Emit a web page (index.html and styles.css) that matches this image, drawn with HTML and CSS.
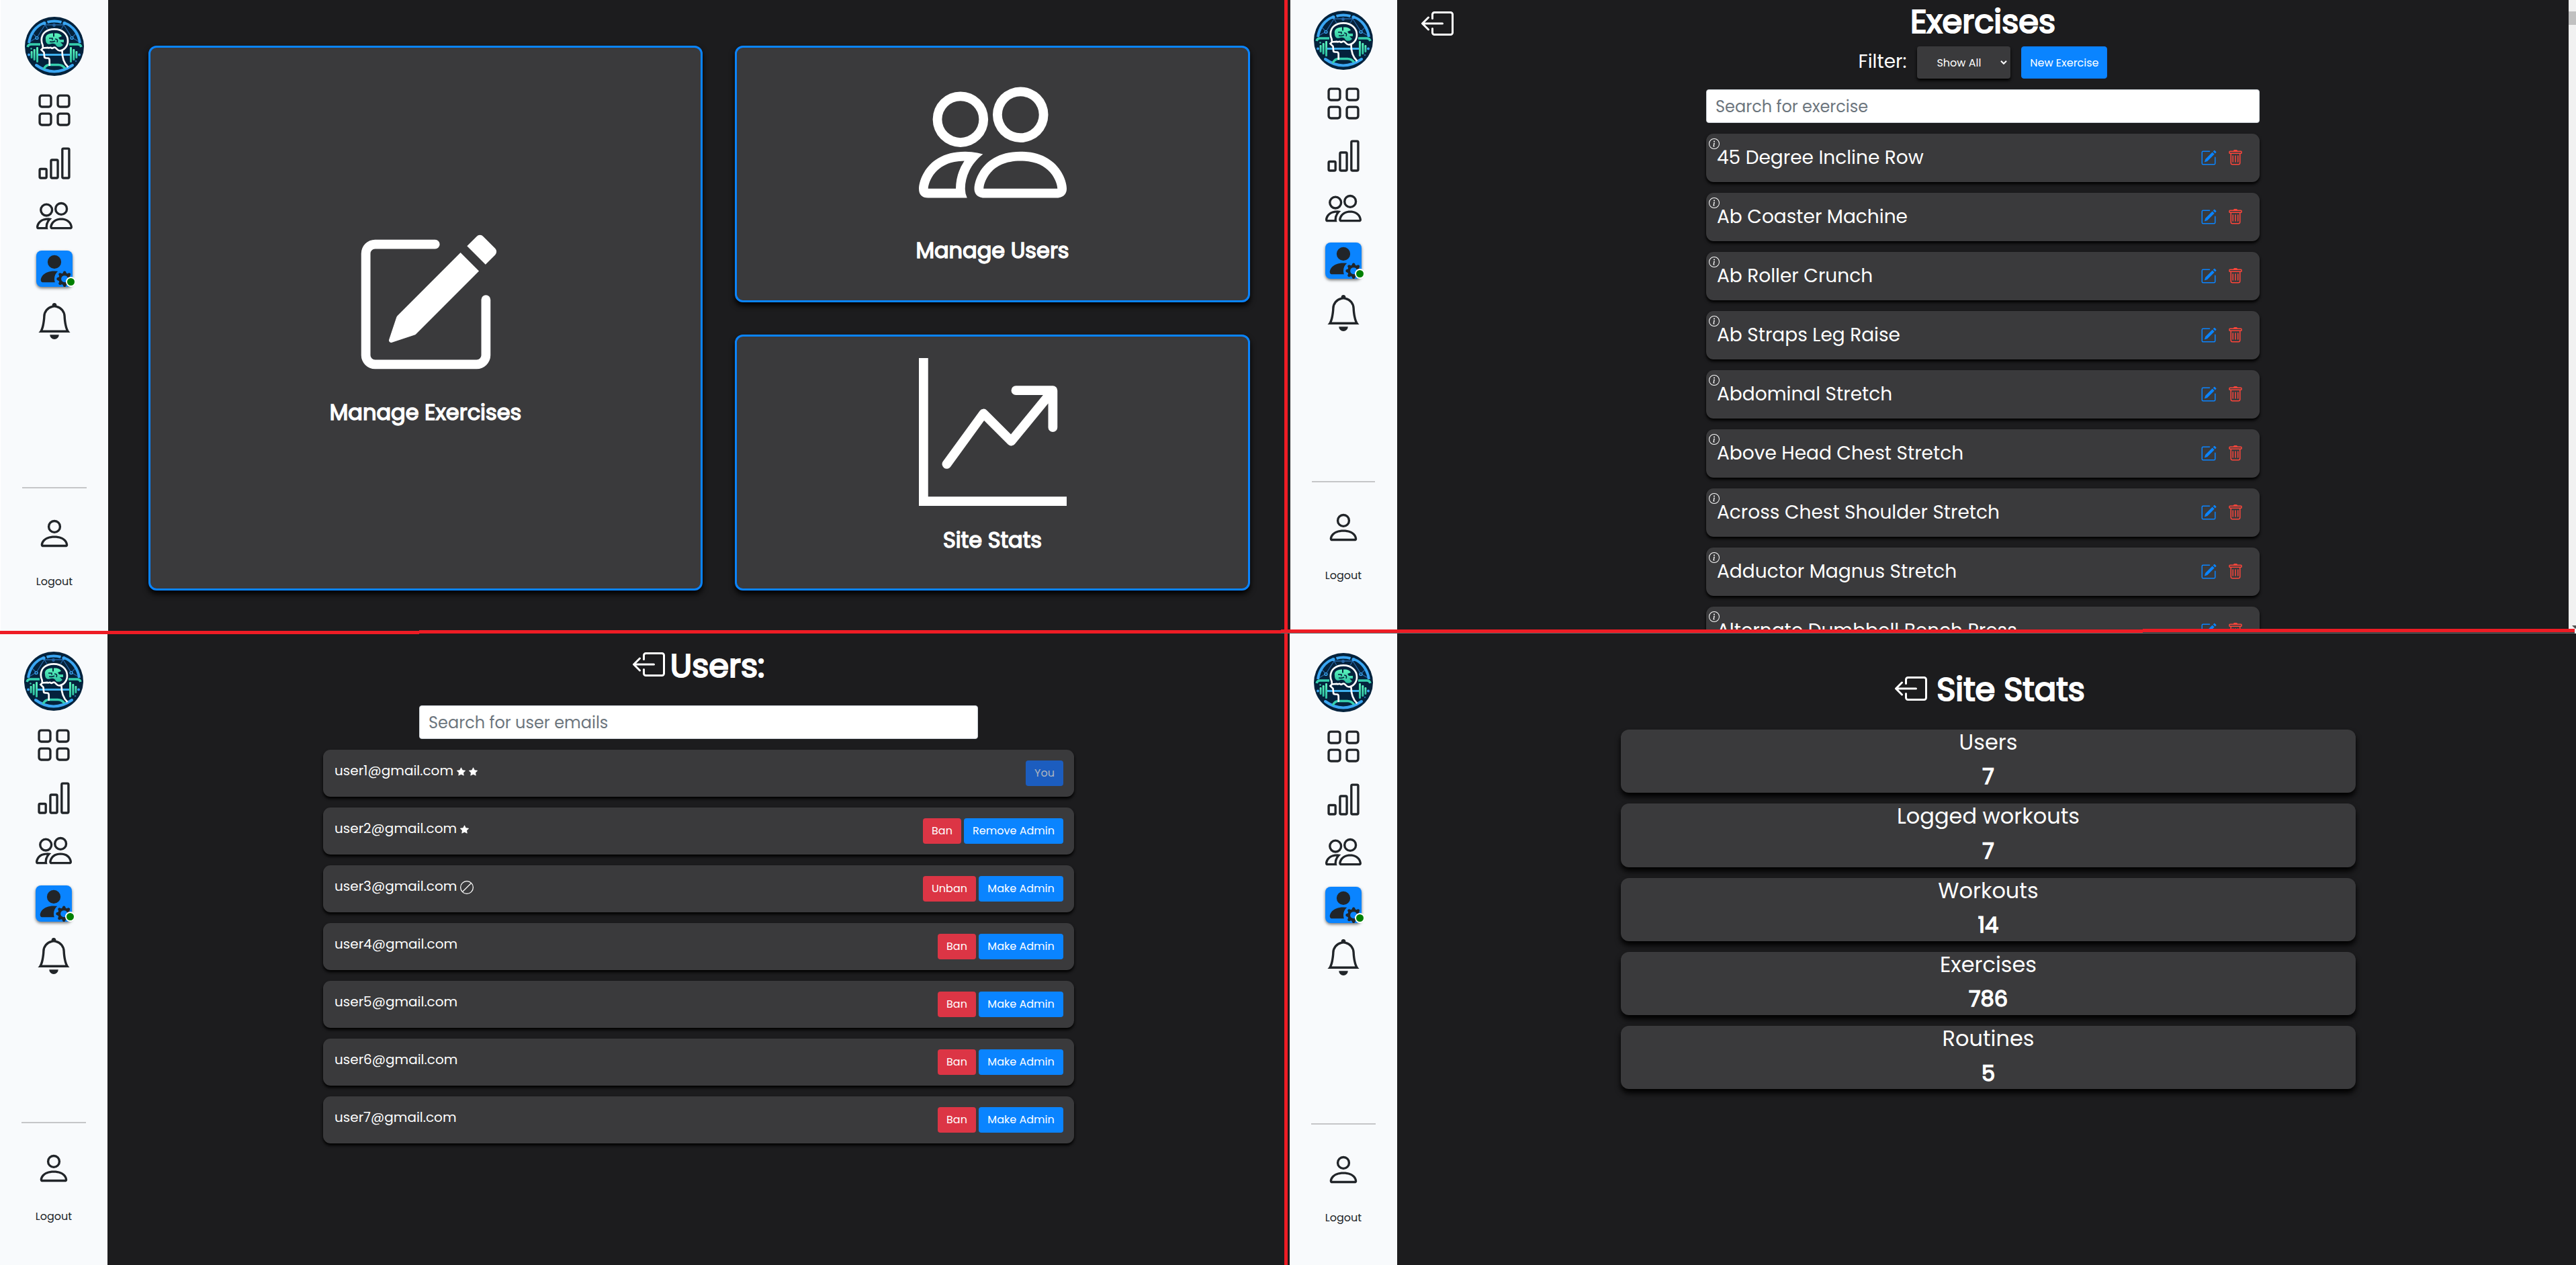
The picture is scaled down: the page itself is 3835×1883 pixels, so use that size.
FILE: index.html
```html
<!DOCTYPE html>
<html lang="en">
<head>
<meta charset="utf-8">
<title>Admin</title>
<link rel="stylesheet" href="styles.css">
</head>
<body>
<svg class="sprite" aria-hidden="true">
  <defs>
    <linearGradient id="mint" x1="0" y1="0" x2="0" y2="1"><stop offset="0" stop-color="#5cf5bd"/><stop offset="1" stop-color="#2bbfa0"/></linearGradient>
    <symbol id="logo" viewBox="0 0 88 88">
      <circle cx="44" cy="44" r="44" fill="#04223c"/>
      <g fill="none" stroke="#2765a4" stroke-width="1.3">
        <path d="M30 12H58M30 12 18 31 6 38M18 31 11 24M58 12 70 31 82 38M70 31 77 24M30 12 35 20M58 12 53 20"/>
      </g>
      <circle cx="43.5" cy="12.5" r="2.4" fill="#2765a4"/>
      <g fill="#04223c" stroke="#3aa6f3" stroke-width="1.4"><circle cx="18" cy="31.500" r="1.900"/><circle cx="70" cy="31.500" r="1.900"/></g>
      <g fill="none" stroke="#3aa6f3" stroke-width="4">
        <path d="M6 39C8 25 16 14 28 9.500" /><path d="M82 39C80 25 72 14 60 9.500"/>
        <path d="M33.500 8Q44 5 54.500 8"/>
        <path d="M17 72Q43.500 91 71 72" stroke-width="4" stroke-linecap="round"/>
      </g>
      <circle cx="29" cy="9.500" r="2.600" fill="#3aa6f3"/><circle cx="59" cy="9.500" r="2.600" fill="#3aa6f3"/>
      <g fill="none" stroke="#36cfae" stroke-width="3.400">
        <path d="M4 45Q5 41 9 41H23M66 41H79Q83 41 84 45"/>
      </g>
      <path d="M20 56.500H67" stroke="#3fb1ee" stroke-width="3"/>
      <g fill="#3aa6f3"><circle cx="6" cy="56.500" r="2"/><circle cx="81" cy="56.500" r="2"/></g>
      <g fill="url(#mint)"><rect x="17" y="45" width="3" height="23" rx="1.200"/><rect x="12.700" y="48" width="3" height="17" rx="1.200"/><rect x="8.700" y="51" width="2.800" height="11" rx="1.200"/>
      <rect x="67" y="45" width="3" height="23" rx="1.200"/><rect x="71.300" y="48" width="3" height="17" rx="1.200"/><rect x="75.500" y="51" width="2.800" height="11" rx="1.200"/></g>
      <circle cx="9.500" cy="47.500" r="1.200" fill="#36cfae"/><circle cx="76" cy="66" r="1.300" fill="#2765a4"/>
      <circle cx="44" cy="34" r="19" fill="#04223c"/>
      <path d="M28 78Q31 71.500 37 71.500H50Q56 71.500 60 77" fill="none" stroke="#36cfae" stroke-width="3.400"/>
      <path d="M36.700 73V64.500Q36.700 61.500 34 61.500H32Q29 61.500 29 59L28.500 53 24.500 49 27 46.500 26.500 42C25 39 24.800 37 24.800 34.500 25 24 33 18.400 44 18.400 56 18.400 64 26 64 36 64 44 58 50 52 50.500 48.500 50.500 47.500 47 45 45.800 43 44.500 42 47.500 40 46.800 38.500 44 36.500 47.500 34.500 46L27 46.500M55.500 50C55.300 62 58 69 64.500 75" fill="none" stroke="#fff" stroke-width="2.700"/>
      <path d="M31 34C30 28 34 24.500 42 24.500V29.500H44V24.500H48C52 25 54 27 55 29L50 31 52 34H58V38L53 38 57 42C54 45.500 49 45.500 47 43.500 46 40 42 39 38 40.500 33 42 31 38 31 34Z" fill="url(#mint)"/>
      <path d="M36 32H41V34.500M45 33Q50 33 48 38M37 37Q42 38 45 36" fill="none" stroke="#04223c" stroke-width="1.600"/>
    </symbol>
    <symbol id="grid" viewBox="0 0 16 16"><path d="M1 2.500A1.500 1.500 0 0 1 2.500 1h3A1.500 1.500 0 0 1 7 2.500v3A1.500 1.500 0 0 1 5.500 7h-3A1.500 1.500 0 0 1 1 5.500zM2.500 2a.5.5 0 0 0-.5.5v3a.5.5 0 0 0 .5.5h3a.5.5 0 0 0 .5-.5v-3a.5.5 0 0 0-.5-.5zm6.500.5A1.500 1.500 0 0 1 10.500 1h3A1.500 1.500 0 0 1 15 2.500v3A1.500 1.500 0 0 1 13.500 7h-3A1.500 1.500 0 0 1 9 5.500zm1.500-.5a.5.5 0 0 0-.5.5v3a.5.5 0 0 0 .5.5h3a.5.5 0 0 0 .5-.5v-3a.5.5 0 0 0-.5-.5zM1 10.500A1.500 1.500 0 0 1 2.500 9h3A1.500 1.500 0 0 1 7 10.500v3A1.500 1.500 0 0 1 5.500 15h-3A1.500 1.500 0 0 1 1 13.500zm1.500-.5a.5.5 0 0 0-.5.5v3a.5.5 0 0 0 .5.5h3a.5.5 0 0 0 .5-.5v-3a.5.5 0 0 0-.5-.5zm6.500.5A1.500 1.500 0 0 1 10.500 9h3a1.500 1.500 0 0 1 1.500 1.500v3a1.500 1.500 0 0 1-1.500 1.500h-3A1.500 1.500 0 0 1 9 13.500zm1.500-.5a.5.5 0 0 0-.5.5v3a.5.5 0 0 0 .5.5h3a.5.5 0 0 0 .5-.5v-3a.5.5 0 0 0-.5-.5z"/></symbol>
    <symbol id="bars" viewBox="0 0 16 16"><path d="M4 11H2v3h2zm5-4H7v7h2zm5-5v12h-2V2zm-2-1a1 1 0 0 0-1 1v12a1 1 0 0 0 1 1h2a1 1 0 0 0 1-1V2a1 1 0 0 0-1-1zM6 7a1 1 0 0 1 1-1h2a1 1 0 0 1 1 1v7a1 1 0 0 1-1 1H7a1 1 0 0 1-1-1zm-5 4a1 1 0 0 1 1-1h2a1 1 0 0 1 1 1v3a1 1 0 0 1-1 1H2a1 1 0 0 1-1-1z"/></symbol>
    <symbol id="people" viewBox="0 0 16 16"><path d="M15 14s1 0 1-1-1-4-5-4-5 3-5 4 1 1 1 1zm-7.978-1L7 12.996c.001-.264.167-1.030.76-1.720C8.312 10.629 9.282 10 11 10c1.717 0 2.687.63 3.240 1.276.593.69.758 1.457.76 1.720l-.008.002-.014.002zM11 7a2 2 0 1 0 0-4 2 2 0 0 0 0 4m3-2a3 3 0 1 1-6 0 3 3 0 0 1 6 0M6.936 9.280a6 6 0 0 0-1.230-.247A7 7 0 0 0 5 9c-4 0-5 3-5 4q0 1 1 1h4.216A2.240 2.240 0 0 1 5 13c0-1.010.377-2.042 1.090-2.904.243-.294.526-.569.846-.816M4.920 10A5.500 5.500 0 0 0 4 13H1c0-.26.164-1.030.76-1.724.545-.636 1.492-1.256 3.160-1.275ZM1.500 5.500a3 3 0 1 1 6 0 3 3 0 0 1-6 0m3-2a2 2 0 1 0 0 4 2 2 0 0 0 0-4"/></symbol>
    <symbol id="admin" viewBox="0 0 16 16"><path d="M11 5a3 3 0 1 1-6 0 3 3 0 0 1 6 0m-9 8c0 1 1 1 1 1h5.256A4.500 4.500 0 0 1 8 12.500a4.500 4.500 0 0 1 1.544-3.393Q8.844 9.002 8 9c-5 0-6 3-6 4m9.886-3.540c.18-.613 1.048-.613 1.229 0l.043.148a.64.64 0 0 0 .921.382l.136-.074c.561-.306 1.175.308.87.869l-.075.136a.64.64 0 0 0 .382.92l.149.045c.612.18.612 1.048 0 1.229l-.15.043a.64.64 0 0 0-.38.921l.074.136c.305.561-.309 1.175-.87.87l-.136-.075a.64.64 0 0 0-.92.382l-.045.149c-.18.612-1.048.612-1.229 0l-.043-.15a.64.64 0 0 0-.921-.38l-.136.074c-.561.305-1.175-.309-.87-.87l.075-.136a.64.64 0 0 0-.382-.92l-.148-.045c-.613-.18-.613-1.048 0-1.229l.148-.043a.64.64 0 0 0 .382-.921l-.074-.136c-.306-.561.308-1.175.869-.87l.136.075a.64.64 0 0 0 .92-.382zM14 12.500a1.500 1.500 0 1 0-3 0 1.500 1.500 0 0 0 3 0"/></symbol>
    <symbol id="bell" viewBox="0 0 16 16"><path d="M8 16a2 2 0 0 0 2-2H6a2 2 0 0 0 2 2M8 1.918l-.797.161A4 4 0 0 0 4 6c0 .628-.134 2.197-.459 3.742-.16.767-.376 1.566-.663 2.258h10.244c-.287-.692-.502-1.490-.663-2.258C12.134 8.197 12 6.628 12 6a4 4 0 0 0-3.203-3.920zM14.220 12c.223.447.481.801.78 1H1c.299-.199.557-.553.78-1C2.680 10.200 3 6.880 3 6c0-2.420 1.720-4.440 4.005-4.901a1 1 0 1 1 1.990 0C11.280 1.560 13 3.580 13 6c0 .88.32 4.200 1.220 6"/></symbol>
    <symbol id="person" viewBox="0 0 16 16"><path d="M8 8a3 3 0 1 0 0-6 3 3 0 0 0 0 6m2-3a2 2 0 1 1-4 0 2 2 0 0 1 4 0m4 8c0 1-1 1-1 1H3s-1 0-1-1 1-4 6-4 6 3 6 4m-1-.004c-.001-.246-.154-.986-.832-1.664C11.516 10.680 10.289 10 8 10s-3.516.68-4.168 1.332c-.678.678-.83 1.418-.832 1.664z"/></symbol>
    <symbol id="pencil" viewBox="0 0 16 16"><path d="M15.502 1.940a.5.5 0 0 1 0 .706L14.459 3.690l-2-2L13.502.646a.5.5 0 0 1 .707 0l1.293 1.293zm-1.750 2.456-2-2L4.939 9.210a.5.5 0 0 0-.121.196l-.805 2.414a.25.25 0 0 0 .316.316l2.414-.805a.5.5 0 0 0 .196-.12z"/><path d="M1 13.500A1.500 1.500 0 0 0 2.500 15h11a1.500 1.500 0 0 0 1.500-1.500v-6a.5.5 0 0 0-1 0v6a.5.5 0 0 1-.5.5h-11a.5.5 0 0 1-.5-.5v-11a.5.5 0 0 1 .5-.5H9a.5.5 0 0 0 0-1H2.500A1.500 1.500 0 0 0 1 2.500z"/></symbol>
    <symbol id="graph" viewBox="0 0 16 16"><path d="M0 0h1v15h15v1H0zm10 3.500a.5.5 0 0 1 .5-.5h4a.5.5 0 0 1 .5.5v4a.5.5 0 0 1-1 0V4.900l-3.613 4.417a.5.5 0 0 1-.74.037L7.060 6.767l-3.656 5.027a.5.5 0 0 1-.808-.588l4-5.500a.5.5 0 0 1 .758-.06l2.609 2.610L13.445 4H10.500a.5.5 0 0 1-.5-.5"/></symbol>
    <symbol id="exit" viewBox="0 0 16 16"><path d="M6 12.500a.5.5 0 0 0 .5.5h8a.5.5 0 0 0 .5-.5v-9a.5.5 0 0 0-.5-.5h-8a.5.5 0 0 0-.5.5v2a.5.5 0 0 1-1 0v-2A1.500 1.500 0 0 1 6.500 2h8A1.500 1.500 0 0 1 16 3.500v9a1.500 1.500 0 0 1-1.500 1.500h-8A1.500 1.500 0 0 1 5 12.500v-2a.5.5 0 0 1 1 0z"/><path d="M.146 8.354a.5.5 0 0 1 0-.708l3-3a.5.5 0 1 1 .708.708L1.707 7.500H10.500a.5.5 0 0 1 0 1H1.707l2.147 2.146a.5.5 0 0 1-.708.708z"/></symbol>
    <symbol id="trash" viewBox="0 0 16 16"><path d="M5.500 5.500A.5.5 0 0 1 6 6v6a.5.5 0 0 1-1 0V6a.5.5 0 0 1 .5-.5m2.500 0a.5.5 0 0 1 .5.5v6a.5.5 0 0 1-1 0V6a.5.5 0 0 1 .5-.5m3 .5a.5.5 0 0 0-1 0v6a.5.5 0 0 0 1 0z"/><path d="M14.500 3a1 1 0 0 1-1 1H13v9a2 2 0 0 1-2 2H5a2 2 0 0 1-2-2V4h-.5a1 1 0 0 1-1-1V2a1 1 0 0 1 1-1H6a1 1 0 0 1 1-1h2a1 1 0 0 1 1 1h3.500a1 1 0 0 1 1 1zM4.118 4 4 4.059V13a1 1 0 0 0 1 1h6a1 1 0 0 0 1-1V4.059L11.882 4zM2.500 3h11V2h-11z"/></symbol>
    <symbol id="info" viewBox="0 0 16 16"><path d="M8 15A7 7 0 1 1 8 1a7 7 0 0 1 0 14m0 1A8 8 0 1 0 8 0a8 8 0 0 0 0 16"/><path d="m8.930 6.588-2.290.287-.082.38.45.083c.294.07.352.176.288.469l-.738 3.468c-.194.897.105 1.319.808 1.319.545 0 1.178-.252 1.465-.598l.088-.416c-.2.176-.492.246-.686.246-.275 0-.375-.193-.304-.533zM9 4.500a1 1 0 1 1-2 0 1 1 0 0 1 2 0"/></symbol>
    <symbol id="star" viewBox="0 0 16 16"><path d="M3.612 15.443c-.386.198-.824-.149-.746-.592l.83-4.730L.173 6.765c-.329-.314-.158-.888.283-.95l4.898-.696L7.538.792c.197-.39.73-.39.927 0l2.184 4.327 4.898.696c.441.062.612.636.282.95l-3.522 3.356.83 4.730c.078.443-.36.79-.746.592L8 13.187l-4.389 2.256z"/></symbol>
    <symbol id="banned" viewBox="0 0 16 16"><path d="M8 15A7 7 0 1 1 8 1a7 7 0 0 1 0 14m0 1A8 8 0 1 0 8 0a8 8 0 0 0 0 16"/><path d="M2.800 13.200 13.200 2.800" fill="none" stroke="currentColor"/></symbol>
  </defs>
</svg>
<main class="board">
  <section class="panel panel-home">
    <nav class="sidebar">
      <svg class="logo"><use href="#logo"/></svg>
      <div class="nav-items"><svg><use href="#grid"/></svg><svg><use href="#bars"/></svg><svg><use href="#people"/></svg><span class="active"><svg><use href="#admin"/></svg><i class="dot"></i></span><svg><use href="#bell"/></svg></div>
      <hr><svg class="user"><use href="#person"/></svg><span class="logout">Logout</span>
    </nav>
    <div class="cards">
      <article class="card card-tall"><svg><use href="#pencil"/></svg><h2>Manage Exercises</h2></article>
      <article class="card"><svg><use href="#people"/></svg><h2>Manage Users</h2></article>
      <article class="card card-stats"><svg><use href="#graph"/></svg><h2>Site Stats</h2></article>
    </div>
  </section>

  <section class="panel panel-exercises">
    <nav class="sidebar">
      <svg class="logo"><use href="#logo"/></svg>
      <div class="nav-items"><svg><use href="#grid"/></svg><svg><use href="#bars"/></svg><svg><use href="#people"/></svg><span class="active"><svg><use href="#admin"/></svg><i class="dot"></i></span><svg><use href="#bell"/></svg></div>
      <hr><svg class="user"><use href="#person"/></svg><span class="logout">Logout</span>
    </nav>
    <div class="exercises">
      <svg class="exit"><use href="#exit"/></svg>
      <div class="column">
        <h1><span>Exercises</span></h1>
        <div class="controls"><span class="filter">Filter:</span><span class="select"><span>Show All</span><svg viewBox="0 0 10 6"><path d="M1 .8 5 4.800 9 .8" fill="none" stroke="#fff" stroke-width="2"/></svg></span><span class="new"><span>New Exercise</span></span></div>
        <div class="search"><span>Search for exercise</span></div>
        <div class="rows">
          <div class="exercise"><svg class="info"><use href="#info"/></svg><span>45 Degree Incline Row</span><svg class="edit"><use href="#pencil"/></svg><svg class="del"><use href="#trash"/></svg></div>
          <div class="exercise"><svg class="info"><use href="#info"/></svg><span>Ab Coaster Machine</span><svg class="edit"><use href="#pencil"/></svg><svg class="del"><use href="#trash"/></svg></div>
          <div class="exercise"><svg class="info"><use href="#info"/></svg><span>Ab Roller Crunch</span><svg class="edit"><use href="#pencil"/></svg><svg class="del"><use href="#trash"/></svg></div>
          <div class="exercise"><svg class="info"><use href="#info"/></svg><span>Ab Straps Leg Raise</span><svg class="edit"><use href="#pencil"/></svg><svg class="del"><use href="#trash"/></svg></div>
          <div class="exercise"><svg class="info"><use href="#info"/></svg><span>Abdominal Stretch</span><svg class="edit"><use href="#pencil"/></svg><svg class="del"><use href="#trash"/></svg></div>
          <div class="exercise"><svg class="info"><use href="#info"/></svg><span>Above Head Chest Stretch</span><svg class="edit"><use href="#pencil"/></svg><svg class="del"><use href="#trash"/></svg></div>
          <div class="exercise"><svg class="info"><use href="#info"/></svg><span>Across Chest Shoulder Stretch</span><svg class="edit"><use href="#pencil"/></svg><svg class="del"><use href="#trash"/></svg></div>
          <div class="exercise"><svg class="info"><use href="#info"/></svg><span>Adductor Magnus Stretch</span><svg class="edit"><use href="#pencil"/></svg><svg class="del"><use href="#trash"/></svg></div>
          <div class="exercise"><svg class="info"><use href="#info"/></svg><span>Alternate Dumbbell Bench Press</span><svg class="edit"><use href="#pencil"/></svg><svg class="del"><use href="#trash"/></svg></div>
        </div>
      </div>
    </div>
    <div class="scrollbar"><i class="thumb"></i><i class="down"></i></div>
  </section>

  <section class="panel panel-users">
    <nav class="sidebar">
      <svg class="logo"><use href="#logo"/></svg>
      <div class="nav-items"><svg><use href="#grid"/></svg><svg><use href="#bars"/></svg><svg><use href="#people"/></svg><span class="active"><svg><use href="#admin"/></svg><i class="dot"></i></span><svg><use href="#bell"/></svg></div>
      <hr><svg class="user"><use href="#person"/></svg><span class="logout">Logout</span>
    </nav>
    <div class="users">
      <h1><svg class="exit"><use href="#exit"/></svg><span>Users:</span></h1>
      <div class="search"><span>Search for user emails</span></div>
      <div class="rows">
        <div class="user-row"><span class="mail">user1@gmail.com</span><svg class="star"><use href="#star"/></svg><svg class="star"><use href="#star"/></svg><div class="actions"><b class="you"><span>You</span></b></div></div>
        <div class="user-row"><span class="mail">user2@gmail.com</span><svg class="star"><use href="#star"/></svg><div class="actions"><b class="ban"><span>Ban</span></b><b class="remove"><span>Remove Admin</span></b></div></div>
        <div class="user-row"><span class="mail">user3@gmail.com</span><svg class="banned"><use href="#banned"/></svg><div class="actions"><b class="unban"><span>Unban</span></b><b class="make"><span>Make Admin</span></b></div></div>
        <div class="user-row"><span class="mail">user4@gmail.com</span><div class="actions"><b class="ban"><span>Ban</span></b><b class="make"><span>Make Admin</span></b></div></div>
        <div class="user-row"><span class="mail">user5@gmail.com</span><div class="actions"><b class="ban"><span>Ban</span></b><b class="make"><span>Make Admin</span></b></div></div>
        <div class="user-row"><span class="mail">user6@gmail.com</span><div class="actions"><b class="ban"><span>Ban</span></b><b class="make"><span>Make Admin</span></b></div></div>
        <div class="user-row"><span class="mail">user7@gmail.com</span><div class="actions"><b class="ban"><span>Ban</span></b><b class="make"><span>Make Admin</span></b></div></div>
      </div>
    </div>
  </section>

  <section class="panel panel-stats">
    <nav class="sidebar">
      <svg class="logo"><use href="#logo"/></svg>
      <div class="nav-items"><svg><use href="#grid"/></svg><svg><use href="#bars"/></svg><svg><use href="#people"/></svg><span class="active"><svg><use href="#admin"/></svg><i class="dot"></i></span><svg><use href="#bell"/></svg></div>
      <hr><svg class="user"><use href="#person"/></svg><span class="logout">Logout</span>
    </nav>
    <div class="stats">
      <h1><svg class="exit"><use href="#exit"/></svg><span>Site Stats</span></h1>
      <div class="stat"><span>Users</span><strong>7</strong></div>
      <div class="stat"><span>Logged workouts</span><strong>7</strong></div>
      <div class="stat"><span>Workouts</span><strong>14</strong></div>
      <div class="stat"><span>Exercises</span><strong>786</strong></div>
      <div class="stat"><span>Routines</span><strong>5</strong></div>
    </div>
  </section>

  <i class="rule rule-v"></i>
  <i class="rule rule-a"></i><i class="rule rule-b"></i><i class="rule rule-c"></i><i class="rule rule-d"></i>
</main>
</body>
</html>
```
FILE: styles.css
```css
* { box-sizing: border-box; }
body { margin: 0; background: #1c1c1e; color: #fff; font-family: Poppins, Inter, "Open Sans", sans-serif; }
svg { display: block; fill: currentColor; flex: none; }
h1, h2, strong { margin: 0; font-weight: 400; -webkit-text-stroke: .046em currentColor; }
.sprite { position: absolute; width: 0; height: 0; }

.board { position: relative; display: grid; grid-template-columns: 1920px 1915px; grid-template-rows: 943px 940px; width: 3835px; height: 1883px; overflow: hidden; }
.panel { display: flex; overflow: hidden; min-width: 0; min-height: 0; }
.panel-home { --top: 25px; --lead: 24px; --gap: 24.600px; --foot: 220px; border-left: 1px solid #fff; }
.panel-exercises { --top: 16px; --lead: 22.600px; --gap: 24.100px; --foot: 223px; padding-left: 1px; }
.panel-users { --top: 27px; --lead: 24px; --gap: 24.600px; --foot: 220px; }
.panel-stats { --top: 29px; --lead: 24px; --gap: 24.600px; --foot: 220px; }

.sidebar { flex: none; width: 160px; padding-top: var(--top); background: #f8fafc; color: #212529; display: flex; flex-direction: column; align-items: center; }
.panel-exercises .sidebar { width: 159px; padding-right: 1px; }
.logo { width: 88px; height: 88px; }
.nav-items { display: flex; flex-direction: column; gap: var(--gap); margin-top: var(--lead); }
.nav-items svg, .user { width: 54px; height: 54px; }
.active { position: relative; background: #0a84ff; border-radius: 8px; box-shadow: 0 2px 4px rgba(0, 0, 0, .55); }
.dot { position: absolute; left: 44px; top: 39px; width: 15px; height: 15px; border: 2px solid #fff; border-radius: 50%; background: #008000; }
.sidebar hr { width: 96px; height: 2px; border: 0; background: #c5c6c8; margin: var(--foot) 0 40px; }
.panel-exercises hr { width: 94px; }
.logout { margin-top: 35px; font-size: 16px; line-height: 20px; }

.cards { display: grid; grid-template: 382px 381px / 825px 767px; gap: 48px; padding: 68px 0 0 60px; }
.card { display: flex; flex-direction: column; align-items: center; padding-top: 31px; background: #3a3a3c; border: 3px solid #0a84ff; border-radius: 12px; box-shadow: 0 5px 9px #000; }
.card svg { width: 220px; height: 220px; }
.card h2 { margin-top: 31px; font-size: 32px; line-height: 40px; }
.card-tall { grid-row: span 2; padding-top: 272px; }
.card-stats { padding-top: 32px; }

h1 { font-size: 48px; line-height: 60px; }
.exit { width: 48px; height: 48px; }
.search { display: flex; align-items: center; height: 50px; padding-left: 13px; background: #fff; border: 1px solid #ced4da; border-radius: 4px; color: #6c757d; font-size: 24px; }

.exercises { flex: none; width: 1744px; display: grid; grid-template-columns: 424px 824px; padding-left: 36px; align-items: start; }
.exercises .exit { margin-top: 11px; }
.column { display: flex; flex-direction: column; }
.column h1 { text-align: center; padding: 3px 0 6px; }
.controls { display: flex; justify-content: center; align-items: center; gap: 16px; height: 48px; margin-bottom: 16px; }
.filter { font-size: 28px; line-height: 42px; padding-bottom: 3px; }
.select, .new { height: 48px; display: flex; align-items: center; font-size: 16px; border-radius: 4px; }
.select { width: 139px; padding-left: 29px; background: #3a3a3c; box-shadow: 0 3px 4px #000; }
.select svg { width: 10px; height: 6px; margin-left: 29px; }
.new { width: 128px; justify-content: center; background: #0a84ff; border: 1px solid #0d7bf5; }
.rows { display: flex; flex-direction: column; gap: 16px; margin-top: 16px; }
.exercise { flex: none; height: 72px; display: flex; align-items: center; background: #3a3a3c; border-radius: 11px; box-shadow: 0 3px 4px #000; padding-right: 24px; font-size: 28px; }
.info { width: 16px; height: 16px; align-self: flex-start; margin: 7px -4px 0 4px; }
.exercise span { flex: 1; white-space: nowrap; line-height: 36px; }
.edit, .del { width: 24px; height: 24px; color: #0a84ff; }
.del { color: #ff453a; margin-left: 16px; }
.scrollbar { width: 11px; background: #f1f1f1; display: flex; flex-direction: column; }
.thumb { height: 20px; margin-top: 17px; background: #c1c1c1; }
.down { margin: 894px 0 0 5px; width: 0; border: 5px solid transparent; border-top-color: #505050; }

.users { flex: none; width: 1760px; display: flex; flex-direction: column; align-items: center; padding-top: 19px; }
.users h1, .stats h1 { display: flex; align-items: center; }
.users h1 { gap: 8px; }
.users h1 .exit { margin-bottom: 6px; }
.users .search { width: 832px; margin-top: 28px; }
.users .rows { width: 1118px; }
.user-row { height: 70px; display: flex; align-items: center; padding: 0 16px 0 17px; background: #3a3a3c; border-radius: 11px; box-shadow: 0 3px 4px #000; }
.mail { font-size: 20px; line-height: 30px; padding-bottom: 8px; }
.star { width: 13px; height: 13px; margin-left: 5px; margin-bottom: 5px; }
.banned { width: 20px; height: 20px; margin-left: 5px; margin-bottom: 5px; }
.actions { display: flex; gap: 4px; margin-left: auto; }
.actions b { height: 38px; display: flex; align-items: center; justify-content: center; padding-bottom: 1px; border-radius: 4px; font-size: 16px; font-weight: 400; background: #0a84ff; }
.actions .ban { width: 57px; background: #dc3545; }
.actions .unban { width: 79px; background: #dc3545; }
.actions .make { width: 126px; }
.actions .remove { width: 148px; }
.actions .you { width: 56px; background: #1c5dbf; color: #adb5c0; }

.stats { flex: none; width: 1760px; display: flex; flex-direction: column; align-items: center; padding-top: 54px; gap: 16px; }
.stats h1 { gap: 14px; margin-bottom: 13px; padding-left: 5px; }
.stats h1 .exit { margin-bottom: 5px; }
.stat { width: 1094px; height: 94.300px; display: flex; flex-direction: column; align-items: center; background: #3a3a3c; border-radius: 12px; box-shadow: 0 6px 9px #000; }
.stat span { font-size: 32px; line-height: 38px; }
.stat strong { font-size: 32px; line-height: 40px; margin-top: 12.400px; }

.rule { position: absolute; height: 5px; background: #ee1c25; }
.rule-v { left: 1912px; top: 0; width: 5px; height: 1883px; }
.rule-a { left: 0; top: 939px; width: 624px; }
.rule-b { left: 624px; top: 938px; width: 1283px; }
.rule-c { left: 1907px; top: 937px; width: 1283px; box-shadow: 0 1px #66666a; }
.rule-d { left: 3190px; top: 936px; width: 643px; height: 6px; border-bottom: 1px solid #3a3a3c; box-shadow: 0 1px #66666a; }
```
